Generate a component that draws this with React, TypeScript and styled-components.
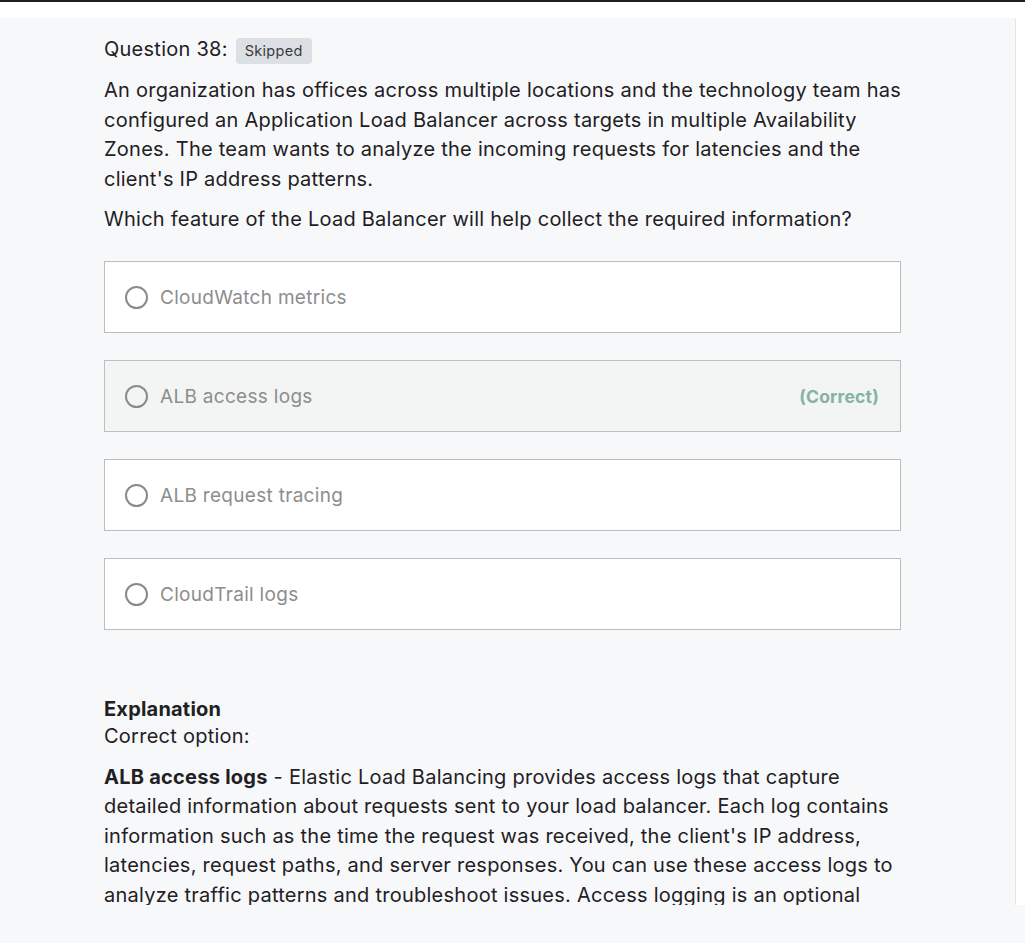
import React from "react";
import styled, { createGlobalStyle } from "styled-components";

const GlobalStyle = createGlobalStyle`
  html, body {
    margin: 0;
    padding: 0;
    height: 100%;
    background: #ffffff;
  }
  body {
    font-family: Inter, "Noto Sans", "Liberation Sans", sans-serif;
    color: #1f2023;
    -webkit-font-smoothing: antialiased;
  }
`;

const Page = styled.div`
  display: flex;
  flex-direction: column;
  height: 943px;
  overflow: hidden;
  border-top: 2px solid #1f1f1f;
  box-sizing: border-box;
`;

const TopGap = styled.div`
  height: 16px;
  background: #ffffff;
  flex: none;
`;

const Viewport = styled.div`
  display: flex;
  height: 887px;
  flex: none;
  background: #ffffff;
`;

const ScrollArea = styled.main`
  width: 1016px;
  flex: none;
  background: #f7f8fa;
  border-right: 1px solid #e4e5e7;
  overflow: hidden;
  box-sizing: border-box;
  padding: 15px 0 0 104px;
`;

const Footer = styled.div`
  flex: 1;
  background: #f7f8fa;
`;

const Content = styled.div`
  width: 800px;
`;

const QuestionHeader = styled.div`
  display: flex;
  align-items: center;
  gap: 8px;
  height: 32px;
`;

const QuestionTitle = styled.span`
  font-size: 20px;
  letter-spacing: 0.25px;
`;

const Badge = styled.span`
  display: inline-flex;
  align-items: center;
  height: 26px;
  padding: 0 9px;
  margin-top: 3px;
  border-radius: 4px;
  background: #dcdfe4;
  color: #3a3b3e;
  font-size: 14.5px;
  letter-spacing: 0.3px;
`;

const Paragraph = styled.p<{ $gap?: number }>`
  margin: ${(p) => p.$gap ?? 0}px 0 0;
  font-size: 20px;
  line-height: 29.5px;
  letter-spacing: 0.25px;
`;

const OptionList = styled.div`
  display: flex;
  flex-direction: column;
  gap: 27px;
  margin-top: 26px;
  width: 797px;
`;

const OptionBox = styled.div<{ $correct?: boolean }>`
  display: flex;
  align-items: center;
  height: 72px;
  box-sizing: border-box;
  padding: 1px 21px 0 20px;
  border: 1px solid #bdbdbd;
  background: ${(p) => (p.$correct ? "#f2f5f4" : "#ffffff")};
`;

const Radio = styled.span`
  width: 23px;
  height: 23px;
  box-sizing: border-box;
  border: 2.5px solid #8a8a8a;
  border-radius: 50%;
  flex: none;
  margin-right: 12px;
`;

const OptionLabel = styled.span`
  flex: 1;
  font-size: 19px;
  color: #8d8d8d;
  letter-spacing: 0.3px;
`;

const CorrectTag = styled.span`
  font-size: 17.5px;
  font-weight: 700;
  color: #86b2a5;
  letter-spacing: 0.2px;
`;

const Explanation = styled.section`
  margin-top: 66px;
`;

const ExplanationTitle = styled.div`
  font-size: 20px;
  font-weight: 700;
  line-height: 27px;
  letter-spacing: 0.2px;
`;

const ExplanationLead = styled.div`
  font-size: 20px;
  line-height: 27px;
  letter-spacing: 0.25px;
`;

const options = [
  { label: "CloudWatch metrics" },
  { label: "ALB access logs", correct: true },
  { label: "ALB request tracing" },
  { label: "CloudTrail logs" },
];

export default function App() {
  return (
    <>
      <GlobalStyle />
      <Page>
        <TopGap />
        <Viewport>
          <ScrollArea>
            <Content>
              <QuestionHeader>
                <QuestionTitle>Question 38:</QuestionTitle>
                <Badge>Skipped</Badge>
              </QuestionHeader>
              <Paragraph $gap={11}>
                An organization has offices across multiple locations and the
                technology team has configured an Application Load Balancer
                across targets in multiple Availability Zones. The team wants to
                analyze the incoming requests for latencies and the client's IP
                address patterns.
              </Paragraph>
              <Paragraph $gap={11}>
                Which feature of the Load Balancer will help collect the
                required information?
              </Paragraph>
              <OptionList>
                {options.map((o) => (
                  <OptionBox key={o.label} $correct={o.correct}>
                    <Radio />
                    <OptionLabel>{o.label}</OptionLabel>
                    {o.correct && <CorrectTag>(Correct)</CorrectTag>}
                  </OptionBox>
                ))}
              </OptionList>
              <Explanation>
                <ExplanationTitle>Explanation</ExplanationTitle>
                <ExplanationLead>Correct option:</ExplanationLead>
                <Paragraph $gap={13}>
                  <strong>ALB access logs</strong> - Elastic Load Balancing
                  provides access logs that capture detailed information about
                  requests sent to your load balancer. Each log contains
                  information such as the time the request was received, the
                  client's IP address, latencies, request paths, and server
                  responses. You can use these access logs to analyze traffic
                  patterns and troubleshoot issues. Access logging is an
                  optional feature of Elastic Load Balancing that is disabled by
                  default.
                </Paragraph>
              </Explanation>
            </Content>
          </ScrollArea>
        </Viewport>
        <Footer />
      </Page>
    </>
  );
}
